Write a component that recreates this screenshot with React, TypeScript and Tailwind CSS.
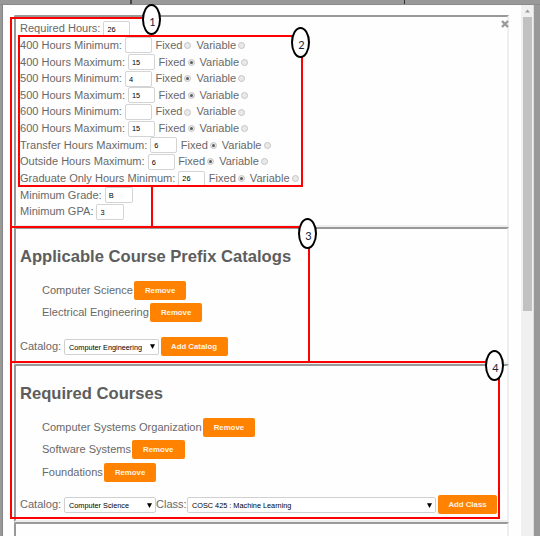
import React from "react";

function Field({ value, width = "w-[27px]" }: { value: string; width?: string }) {
  return (
    <span
      className={`${width} ml-[3px] flex h-4 shrink-0 items-center rounded-[2px] border border-[#d4d4d4] bg-white pt-px pl-[3px] text-[7.4px] text-black`}
    >
      {value}
    </span>
  );
}

function Radio({ on }: { on: boolean }) {
  return (
    <span className="ml-[2px] flex size-[7px] shrink-0 items-center justify-center rounded-full border border-[#c4c4c4] bg-[#e9e9e9]">
      {on && <span className="size-[3px] rounded-full bg-[#5c5c5c]" />}
    </span>
  );
}

type Row = { label: string; value: string; fixed?: boolean; width?: string };

const rows: Row[] = [
  { label: "Required Hours:", value: "26" },
  { label: "400 Hours Minimum:", value: "", fixed: false },
  { label: "400 Hours Maximum:", value: "15", fixed: true },
  { label: "500 Hours Minimum:", value: "4", fixed: true },
  { label: "500 Hours Maximum:", value: "15", fixed: true },
  { label: "600 Hours Minimum:", value: "", fixed: false },
  { label: "600 Hours Maximum:", value: "15", fixed: true },
  { label: "Transfer Hours Maximum:", value: "6", fixed: true },
  { label: "Outside Hours Maximum:", value: "6", fixed: true },
  { label: "Graduate Only Hours Minimum:", value: "26", fixed: true },
  { label: "Minimum Grade:", value: "B", width: "w-[28px]" },
  { label: "Minimum GPA:", value: "3", width: "w-[28px]" },
];

function Button({ children, width = "w-[52.5px]" }: { children: React.ReactNode; width?: string }) {
  return (
    <span
      className={`${width} flex h-[19px] shrink-0 items-center justify-center rounded-[2px] bg-[#ff8300] pt-px text-[7.8px] font-bold text-[#fff3e6]`}
    >
      {children}
    </span>
  );
}

function Select({ children, width }: { children: React.ReactNode; width: string }) {
  return (
    <span
      className={`${width} mt-px flex h-4 shrink-0 items-center justify-between rounded-[2px] border border-[#d0d0d0] bg-white pr-[3px] pl-1 text-[7.3px] text-black`}
    >
      <span className="pt-px">{children}</span>
      <svg width="5" height="5" viewBox="0 0 5 5">
        <path d="M0 0.3H5L2.5 5Z" fill="#000" />
      </svg>
    </span>
  );
}

function Panel({ height, children }: { height: string; children?: React.ReactNode }) {
  return (
    <section
      className={`${height} w-[495px] shrink-0 rounded-tl-[2px] border-2 border-t-[#999] border-r-[#eee] border-b-[#eee] border-l-[#999] pl-[4px]`}
    >
      {children}
    </section>
  );
}

function Item({ name }: { name: string }) {
  return (
    <li className="flex h-[22.2px] items-center gap-px pl-[22px]">
      <span>{name}</span>
      <Button>Remove</Button>
    </li>
  );
}

function Marker({ n, place }: { n: number; place: string }) {
  return (
    <div
      className={`${place} absolute flex h-[31px] w-[19px] items-center justify-center rounded-[50%] border-2 border-black bg-white pt-[3px] pl-[2px] font-[Lato] text-[11px] text-[#17233c]`}
    >
      {n}
    </div>
  );
}

export default function App() {
  return (
    <div className="relative h-[536px] w-[540px] overflow-hidden bg-[#999] font-['Liberation_Sans',Arial,sans-serif] text-[11.06px] leading-none whitespace-nowrap text-[#696969]">
      <div className="flex h-[5px] border-b border-[#8a8a8a]">
        <div className="ml-[130px] w-[2px] bg-[#444]" />
        <div className="ml-[272px] w-px bg-[#333]" />
      </div>
      <div className="flex h-[531px]">
        <div className="w-[3px] border-r border-[#858585]" />
        <main className="flex w-[518px] flex-col bg-[#fefefe] pt-[10px] pl-[11px]">
          <Panel height="h-[212px]">
            <div className="pt-[3.5px]">
              {rows.map((r) => (
                <div key={r.label} className="flex h-[16.65px] items-center">
                  <span>{r.label}</span>
                  <Field value={r.value} width={r.width} />
                  {r.fixed !== undefined && (
                    <>
                      <span className="ml-[3.5px]">Fixed</span>
                      <Radio on={r.fixed} />
                      <span className="ml-[5px]">Variable</span>
                      <Radio on={false} />
                    </>
                  )}
                </div>
              ))}
            </div>
          </Panel>
          <Panel height="h-[137px]">
            <h2 className="pt-[20px] text-[16.6px] font-bold text-[#5d5d5d]">Applicable Course Prefix Catalogs</h2>
            <ul className="pt-[13.5px]">
              <Item name="Computer Science" />
              <Item name="Electrical Engineering" />
            </ul>
            <div className="mt-[13.5px] flex items-center">
              <span className="w-[44px]">Catalog:</span>
              <Select width="w-[95px]">Computer Engineering</Select>
              <span className="w-[1.5px]" />
              <Button width="w-[67px]">Add Catalog</Button>
            </div>
          </Panel>
          <Panel height="h-[158px]">
            <h2 className="pt-[20px] text-[16.6px] font-bold text-[#5d5d5d]">Required Courses</h2>
            <ul className="pt-[14px]">
              <Item name="Computer Systems Organization" />
              <Item name="Software Systems" />
              <Item name="Foundations" />
            </ul>
            <div className="mt-[12px] flex items-center">
              <span className="w-[44px]">Catalog:</span>
              <Select width="w-[92px]">Computer Science</Select>
              <span className="w-[31px]">Class:</span>
              <Select width="w-[249px]">COSC 425 : Machine Learning</Select>
              <span className="w-[2px]" />
              <Button width="w-[59px]">Add Class</Button>
            </div>
          </Panel>
          <Panel height="h-[60px]" />
        </main>
        <aside className="w-[13px] border-r border-[#ddd] bg-[#f0f0f0]">
          <div className="flex h-[12px] items-center justify-center">
            <svg width="5" height="4" viewBox="0 0 5 4">
              <path d="M0 3.5L2.5 0.5L5 3.5Z" fill="#999" />
            </svg>
          </div>
          <div className="ml-[2px] h-[294px] w-[9px] bg-[#c1c1c1]" />
        </aside>
      </div>

      <svg className="absolute top-[20px] left-[501px]" width="8" height="8" viewBox="0 0 8 8">
        <path d="M1 1L7 7M7 1L1 7" stroke="#999" strokeWidth="2.4" />
      </svg>

      <div className="absolute top-[17px] left-[10px] h-[502px] w-[2px] bg-[#f00]" />
      <div className="absolute top-[17px] left-[10px] h-[2px] w-[140px] bg-[#f00]" />
      <div className="absolute top-[187px] left-[151px] h-[40px] w-[2px] bg-[#f00]" />
      <div className="absolute top-[35px] left-[18px] h-[152px] w-[285px] border-2 border-[#f00]" />
      <div className="absolute top-[226px] left-[10px] h-[137px] w-[300px] border-2 border-[#f00]" />
      <div className="absolute top-[361px] left-[10px] h-[158px] w-[490px] border-2 border-[#f00]" />
      <Marker n={1} place="top-[4px] left-[142px]" />
      <Marker n={2} place="top-[27px] left-[291px]" />
      <Marker n={3} place="top-[218px] left-[298px]" />
      <Marker n={4} place="top-[350px] left-[485px]" />
    </div>
  );
}
